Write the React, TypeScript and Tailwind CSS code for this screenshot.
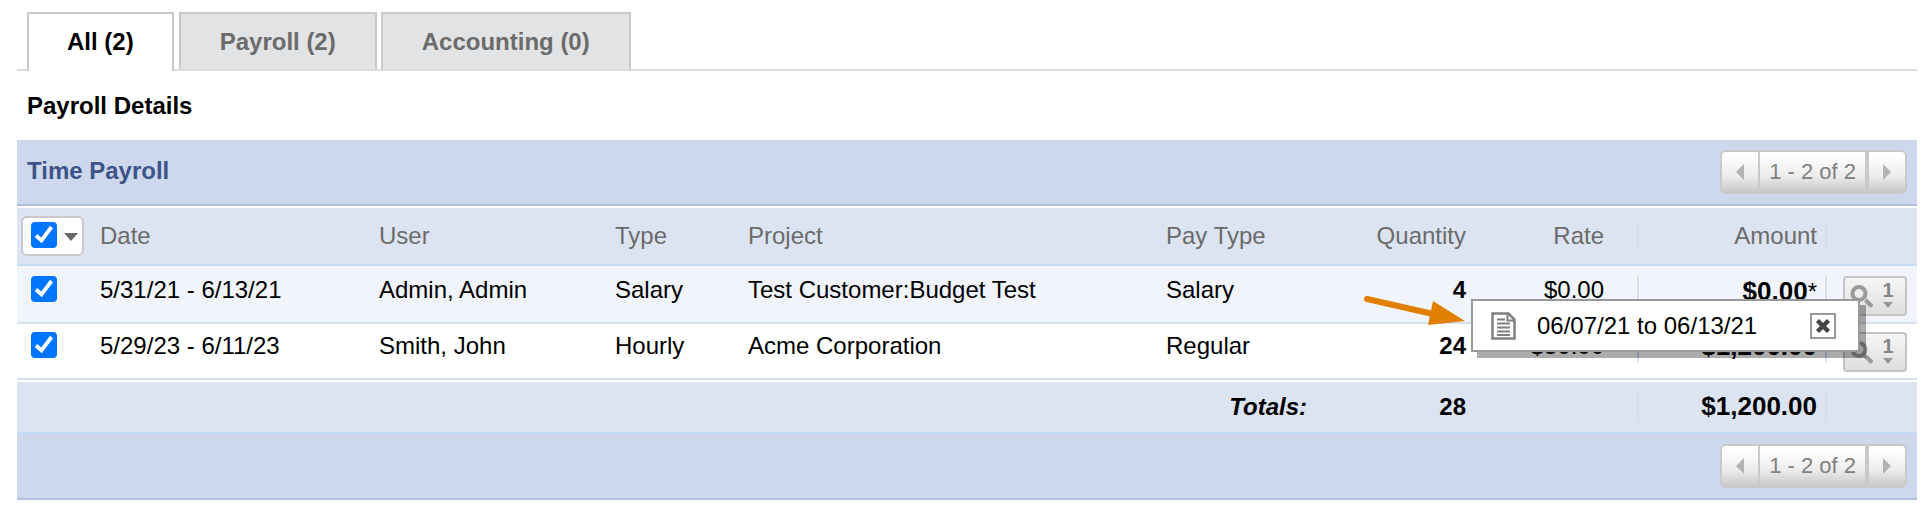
import { useState } from "react";

const tabs = [
  { label: "All (2)", active: true },
  { label: "Payroll (2)", active: false },
  { label: "Accounting (0)", active: false },
];

const rows = [
  {
    date: "5/31/21 - 6/13/21",
    user: "Admin, Admin",
    type: "Salary",
    project: "Test Customer:Budget Test",
    payType: "Salary",
    quantity: "4",
    rate: "$0.00",
    amount: "$0.00",
    note: true,
  },
  {
    date: "5/29/23 - 6/11/23",
    user: "Smith, John",
    type: "Hourly",
    project: "Acme Corporation",
    payType: "Regular",
    quantity: "24",
    rate: "$50.00",
    amount: "$1,200.00",
    note: false,
  },
];

function Checkbox({ label }: { label: string }) {
  const [checked, setChecked] = useState(true);
  return (
    <span className="relative block size-[26px] shrink-0">
      <input
        type="checkbox"
        aria-label={label}
        checked={checked}
        onChange={() => setChecked(!checked)}
        className="block size-[26px] appearance-none rounded border-2 border-gray-400 bg-white checked:border-[#0075ff] checked:bg-[#0075ff]"
      />
      {checked && (
        <svg viewBox="0 0 26 26" className="pointer-events-none absolute inset-0" aria-hidden="true">
          <path d="M5 13.5 L10.5 18.5 L20.5 5" fill="none" stroke="#fff" strokeWidth="3.8" />
        </svg>
      )}
    </span>
  );
}

function Pager() {
  return (
    <div className="flex h-11 items-stretch overflow-hidden rounded-md border-2 border-[#c9c9c9] bg-linear-to-b from-white from-10% via-[#ececec] via-60% to-[#c9c9c9] text-[22px] leading-10 text-[#808080]">
      <button type="button" aria-label="Previous page" className="flex w-9 items-center justify-center">
        <svg width="8" height="16" viewBox="0 0 8 16" aria-hidden="true">
          <path d="M8 0v16L0 8z" fill="#b3b3b3" />
        </svg>
      </button>
      <span className="border-r-4 border-l-2 border-[#c9c9c9] px-[9px] whitespace-nowrap">1 - 2 of 2</span>
      <button type="button" aria-label="Next page" className="flex w-9 items-center justify-center">
        <svg width="8" height="16" viewBox="0 0 8 16" aria-hidden="true">
          <path d="M0 0v16l8-8z" fill="#b3b3b3" />
        </svg>
      </button>
    </div>
  );
}

function DetailsButton() {
  return (
    <button
      type="button"
      aria-label="View details"
      className="flex h-10 w-16 rounded-sm border-2 border-[#c4c4c4] bg-linear-to-b from-[#f6f6f6] to-[#dedede]"
    >
      <svg width="60" height="36" viewBox="0 0 60 36" aria-hidden="true">
        <circle cx="14" cy="15.5" r="6.5" fill="none" stroke="#9a9a9a" strokeWidth="4" />
        <path d="M20.5 22 L27 28.5" stroke="#9a9a9a" strokeWidth="4" />
        <path d="M38 24h10l-5 6z" fill="#959595" />
        <text x="43" y="19" textAnchor="middle" fontSize="20" fontWeight="700" fill="#858585">
          1
        </text>
      </svg>
    </button>
  );
}

function Popup() {
  return (
    <div
      role="dialog"
      aria-label="Pay period"
      className="absolute top-[33px] right-[57px] z-10 flex h-[53px] w-[389px] items-center border-2 border-[#999] bg-white pr-[22px] pl-[18px] shadow-[6px_6px_0_rgba(0,0,0,0.33)]"
    >
      <svg width="25" height="28" viewBox="0 0 25 28" aria-hidden="true">
        <path d="M1.5 1.5h16l6 6v19h-22z" fill="#fff" stroke="#808080" strokeWidth="2.5" />
        <path d="M16.5 1.500v7h7" fill="none" stroke="#808080" strokeWidth="2" />
        <path d="M6 7.500h8M6 11.500h13M6 15.500h13M6 19.500h13M6 23h13" stroke="#808080" strokeWidth="2" />
      </svg>
      <span className="ml-[21px] grow whitespace-nowrap">06/07/21 to 06/13/21</span>
      <button
        type="button"
        aria-label="Close"
        className="flex size-[26px] items-center justify-center border-2 border-[#999] bg-white"
      >
        <svg width="16" height="16" viewBox="0 0 16 16" aria-hidden="true">
          <path d="M2.500 2.500l11 11M13.500 2.500l-11 11" stroke="#444" strokeWidth="4.500" />
        </svg>
      </button>
      <svg
        width="104"
        height="34"
        viewBox="0 0 104 34"
        className="absolute -top-[7px] -left-[112px]"
        aria-hidden="true"
      >
        <path d="M6 5 L72 20" stroke="#e07f00" strokeWidth="6" strokeLinecap="round" />
        <path d="M72 7 L104 27 L67 31z" fill="#e07f00" />
      </svg>
    </div>
  );
}

export default function App() {
  return (
    <main className="bg-white pt-3 pr-[13px] pl-[17px] font-['Liberation_Sans',Arial,sans-serif] text-2xl leading-7 text-black">
      <div role="tablist" className="flex gap-1 border-b-2 border-[#dcdcdc] pl-[10px]">
        {tabs.map((tab) => (
          <button
            key={tab.label}
            type="button"
            role="tab"
            aria-selected={tab.active}
            className={
              tab.active
                ? "-mb-[2px] mr-px h-[59px] border-2 border-b-0 border-[#c9c9c9] bg-white px-[38px] pb-[2px] font-bold"
                : "h-[57px] border-2 border-b-0 border-[#c9c9c9] bg-[#e2e3e4] px-[39px] font-bold text-[#6b6b6b]"
            }
          >
            {tab.label}
          </button>
        ))}
      </div>

      <h1 className="pt-[21px] pb-5 pl-[10px] font-bold">Payroll Details</h1>

      <section>
        <div className="flex items-start justify-between border-b-2 border-[#b0c0e0] bg-[#cdd8ec] p-[10px]">
          <h2 className="pt-[7px] font-bold text-[#3d5488]">Time Payroll</h2>
          <Pager />
        </div>

        <table className="mt-[2px] w-full table-fixed border-separate border-spacing-0">
          <colgroup>
            <col className="w-[83px]" />
            <col className="w-[279px]" />
            <col className="w-[236px]" />
            <col className="w-[133px]" />
            <col />
            <col className="w-[161px]" />
            <col className="w-[139px]" />
            <col className="w-[173px]" />
            <col className="w-[188px]" />
            <col className="w-[90px]" />
          </colgroup>
          <thead>
            <tr className="h-[58px] bg-[#dde4f1] text-left text-[#6b6b6b] [&>th]:border-b-2 [&>th]:border-[#c3daf3]">
              <th className="p-0 pl-1 font-normal">
                <div className="flex h-10 w-[63px] items-center gap-[7px] rounded-md border-2 border-[#c9c9c9] bg-white pb-[2px] pl-2">
                  <Checkbox label="Select all" />
                  <button type="button" aria-label="Selection options" className="pt-1">
                    <svg width="14" height="8" viewBox="0 0 14 8" aria-hidden="true">
                      <path d="M0 0h14L7 8z" fill="#666" />
                    </svg>
                  </button>
                </div>
              </th>
              <th className="p-0 font-normal">Date</th>
              <th className="p-0 font-normal">User</th>
              <th className="p-0 font-normal">Type</th>
              <th className="p-0 font-normal">Project</th>
              <th className="p-0 font-normal">Pay Type</th>
              <th className="p-0 text-right font-normal">Quantity</th>
              <th className="p-0 text-right font-normal">
                <div className="border-r-2 border-[#d3dff0] pr-[33px]">Rate</div>
              </th>
              <th className="p-0 text-right font-normal">
                <div className="border-r-2 border-[#d3dff0] pr-2">Amount</div>
              </th>
              <th className="p-0" aria-label="Details"></th>
            </tr>
          </thead>
          <tbody>
            {rows.map((row) => (
              <tr
                key={row.date}
                className="h-14 align-top first:h-[58px] odd:bg-[#f1f4fa] [&>td]:border-b-2 [&>td]:border-[#d5dfee] [&>td]:pt-2 first:[&>td]:pt-[10px]"
              >
                <td className="pl-[14px]">
                  <Checkbox label={`Select ${row.user}`} />
                </td>
                <td>{row.date}</td>
                <td>{row.user}</td>
                <td>{row.type}</td>
                <td>{row.project}</td>
                <td>{row.payType}</td>
                <td className="text-right font-bold">{row.quantity}</td>
                <td className="text-right">
                  <div className="h-[30px] border-r-2 border-[#d3dff0] pr-[33px]">{row.rate}</div>
                </td>
                <td className="text-right text-[26px] font-bold">
                  <div className="h-[30px] border-r-2 border-[#d3dff0] pr-2">
                    {row.amount}
                    {row.note && <span className="text-2xl font-normal">*</span>}
                  </div>
                </td>
                <td className="relative pl-4">
                  <DetailsButton />
                  {row.note && <Popup />}
                </td>
              </tr>
            ))}
          </tbody>
          <tfoot>
            <tr className="h-[54px] bg-[#dde4f1] font-bold [&>td]:border-t-2 [&>td]:border-b-2 [&>td]:border-t-white [&>td]:border-b-[#c0daf3]">
              <td colSpan={6} className="p-0 pr-5 text-right italic">
                Totals:
              </td>
              <td className="p-0 text-right">28</td>
              <td className="p-0">
                <div className="h-[30px] border-r-2 border-[#d3dff0]"></div>
              </td>
              <td className="p-0 text-right text-[26px]">
                <div className="h-[30px] border-r-2 border-[#d3dff0] pr-2">$1,200.00</div>
              </td>
              <td className="p-0"></td>
            </tr>
          </tfoot>
        </table>

        <div className="flex justify-end border-b-2 border-[#b0c0e0] bg-[#cdd8ec] p-[10px]">
          <Pager />
        </div>
      </section>
    </main>
  );
}
